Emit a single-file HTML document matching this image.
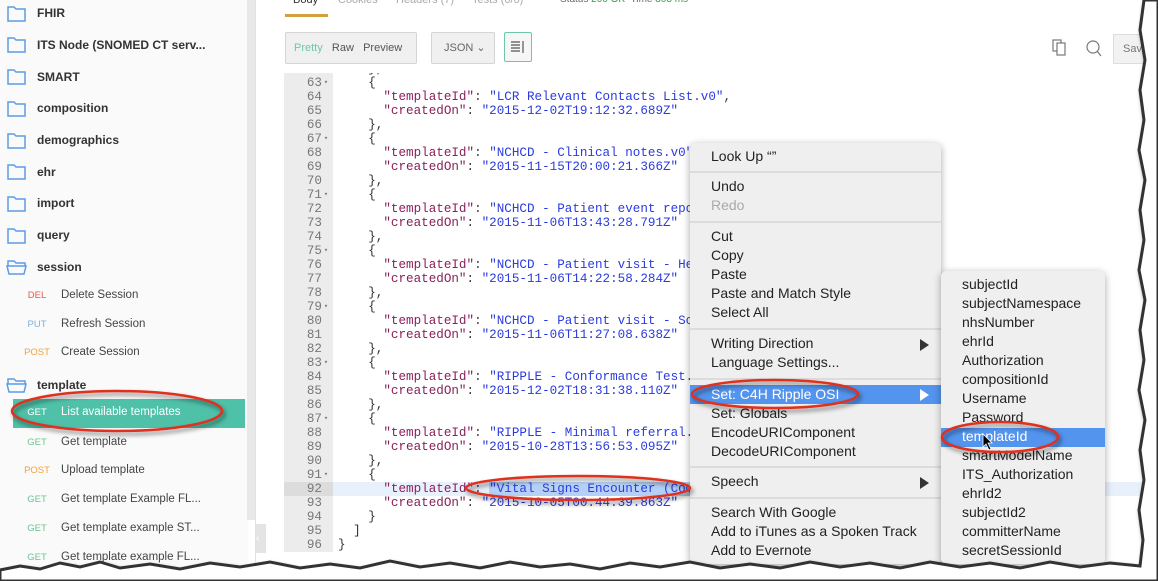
<!DOCTYPE html>
<html><head><meta charset="utf-8"><style>
*{margin:0;padding:0;box-sizing:border-box}
body{width:1158px;height:581px;overflow:hidden;background:#fff;position:relative;font-family:"Liberation Sans",sans-serif}
.abs{position:absolute}
#side{left:0;top:0;width:248px;height:581px;background:#fafafa}
.fold{position:absolute;left:37px;font-size:12px;font-weight:bold;color:#333}
.m{position:absolute;left:20px;width:34px;text-align:center;font-size:9.5px;font-weight:500}
.t{position:absolute;left:61px;font-size:11.5px;color:#444}
.code{position:absolute;font-family:"Liberation Mono",monospace;font-size:12.6px;white-space:pre;line-height:14px;color:#333}
.k{color:#8a1f5a}.s{color:#2a3be0}
.ln{position:absolute;left:284px;width:38px;text-align:right;font-family:"Liberation Mono",monospace;font-size:12.6px;color:#777;line-height:14px}
.menu{position:absolute;background:#efefef;border-radius:5px;box-shadow:0 2px 8px rgba(0,0,0,.35);font-size:14px;color:#222}
.mi{position:absolute;left:21px;line-height:19px;white-space:nowrap}
.sep{position:absolute;left:0;right:0;height:2px;background:#dcdcdc}
.arr{position:absolute;right:12px;width:0;height:0;border-left:9px solid #333;border-top:6px solid transparent;border-bottom:6px solid transparent}
</style></head><body>
<div id="side" class="abs"></div>
<div class="abs" style="left:247px;top:0;width:8px;height:520px;background:#e8e8e8"></div>
<div class="abs" style="left:255px;top:0;width:1px;height:581px;background:#e2e2e2"></div>
<svg class="abs" style="left:0;top:0" width="250" height="581">
<g fill="none" stroke="#5b9de6" stroke-width="1.5">
<path d="M8 7h6l2 2h9v12H8z"/><path d="M8 38h6l2 2h9v12H8z"/><path d="M8 70h6l2 2h9v12H8z"/><path d="M8 102h6l2 2h9v12H8z"/><path d="M8 134h6l2 2h9v12H8z"/><path d="M8 165h6l2 2h9v12H8z"/><path d="M8 197h6l2 2h9v12H8z"/><path d="M8 229h6l2 2h9v12H8z"/>
<path d="M8 261h6l2 2h9v3H8zM7 266h19l-2 8H9z"/><path d="M8 379h6l2 2h9v3H8zM7 384h19l-2 8H9z"/>
</g></svg>
<div class="fold" style="top:6px">FHIR</div>
<div class="fold" style="top:38px">ITS Node (SNOMED CT serv...</div>
<div class="fold" style="top:70px">SMART</div>
<div class="fold" style="top:101px">composition</div>
<div class="fold" style="top:133px">demographics</div>
<div class="fold" style="top:165px">ehr</div>
<div class="fold" style="top:196px">import</div>
<div class="fold" style="top:228px">query</div>
<div class="fold" style="top:260px">session</div>
<div class="fold" style="top:378px">template</div>
<div class="m" style="top:290px;color:#e8574c">DEL</div><div class="t" style="top:289px">Delete Session</div>
<div class="m" style="top:319px;color:#7eaee0">PUT</div><div class="t" style="top:318px">Refresh Session</div>
<div class="m" style="top:347px;color:#f4a03c">POST</div><div class="t" style="top:346px">Create Session</div>
<div class="abs" style="left:13px;top:399px;width:232px;height:29px;background:#4fc1a9"></div>
<div class="m" style="top:407px;color:#fff">GET</div><div class="t" style="top:406px;color:#fff">List available templates</div>
<div class="m" style="top:437px;color:#6cc48f">GET</div><div class="t" style="top:436px">Get template</div>
<div class="m" style="top:465px;color:#f4a03c">POST</div><div class="t" style="top:464px">Upload template</div>
<div class="m" style="top:494px;color:#6cc48f">GET</div><div class="t" style="top:493px">Get template Example FL...</div>
<div class="m" style="top:523px;color:#6cc48f">GET</div><div class="t" style="top:522px">Get template example ST...</div>
<div class="m" style="top:552px;color:#6cc48f">GET</div><div class="t" style="top:551px">Get template example FL...</div>

<div class="abs" style="left:293px;top:-6px;font-size:11px;color:#333">Body</div>
<div class="abs" style="left:338px;top:-6px;font-size:11px;color:#aaa">Cookies</div>
<div class="abs" style="left:396px;top:-6px;font-size:11px;color:#aaa">Headers (7)</div>
<div class="abs" style="left:472px;top:-6px;font-size:11px;color:#aaa">Tests (0/0)</div>
<div class="abs" style="left:560px;top:-6px;font-size:10px;color:#666">Status <span style="color:#3a9a50">200 OK</span> &nbsp;Time <span style="color:#3a9a50">303 ms</span></div>
<div class="abs" style="left:285px;top:14px;width:43px;height:3px;background:#d2a23a"></div>
<div class="abs" style="left:285px;top:32px;width:132px;height:32px;border:1px solid #d5d5d5;background:#f0f0f0;border-radius:2px;font-size:11px;line-height:30px;color:#555;padding-left:8px">
<span style="color:#6cc8a8">Pretty</span>&nbsp;&nbsp; Raw &nbsp;&nbsp;Preview</div>
<div class="abs" style="left:431px;top:32px;width:64px;height:32px;border:1px solid #d5d5d5;background:#f0f0f0;border-radius:2px;font-size:11px;line-height:30px;color:#666;padding-left:12px">JSON ⌄</div>
<div class="abs" style="left:504px;top:32px;width:28px;height:30px;border:1px solid #6cc8a8;border-radius:2px;background:#f6f6f6"></div>
<svg class="abs" style="left:510px;top:40px" width="16" height="14" stroke="#555" stroke-width="1.2"><path d="M1 2h9M1 5h9M1 8h9M1 11h9M13 1v12"/></svg>
<svg class="abs" style="left:1050px;top:37px" width="60" height="22" fill="none" stroke="#777" stroke-width="1.2"><rect x="3" y="3" width="8" height="11"/><rect x="7" y="6" width="8" height="12" fill="#fff"/><circle cx="43" cy="10" r="6"/><path d="M47 14l4 5"/></svg>
<div class="abs" style="left:1113px;top:34px;width:40px;height:30px;border:1px solid #ddd;background:#f2f2f2;font-size:11px;line-height:28px;color:#777;padding-left:9px">Save</div>

<div class="abs" style="left:284px;top:73px;width:49px;height:479px;background:#ececec"></div>
<div class="abs" style="left:284px;top:482px;width:860px;height:14px;background:#e8f0fc"></div>
<div class="abs" style="left:284px;top:482px;width:49px;height:14px;background:#dcdcdc"></div>
<div class="abs" style="left:256px;top:524px;width:10px;height:29px;background:#e4e4e4;color:#fff;font-size:10px;line-height:29px">‹</div>
<div class="ln" style="top:76px">63<br>64<br>65<br>66<br>67<br>68<br>69<br>70<br>71<br>72<br>73<br>74<br>75<br>76<br>77<br>78<br>79<br>80<br>81<br>82<br>83<br>84<br>85<br>86<br>87<br>88<br>89<br>90<br>91<br>92<br>93<br>94<br>95<br>96</div>
<div class="ln" style="top:76px;left:321px;width:10px;font-size:7px;text-align:center">▾<br><br><br><br>▾<br><br><br><br>▾<br><br><br><br>▾<br><br><br><br>▾<br><br><br><br>▾<br><br><br><br>▾<br><br><br><br>▾</div>
<div class="abs" style="left:338px;top:73px;width:820px;height:480px;overflow:hidden">
<div class="code" style="left:0;top:-11px">    },
    {
      <span class="k">"templateId"</span>: <span class="s">"LCR Relevant Contacts List.v0"</span>,
      <span class="k">"createdOn"</span>: <span class="s">"2015-12-02T19:12:32.689Z"</span>
    },
    {
      <span class="k">"templateId"</span>: <span class="s">"NCHCD - Clinical notes.v0"</span>,
      <span class="k">"createdOn"</span>: <span class="s">"2015-11-15T20:00:21.366Z"</span>
    },
    {
      <span class="k">"templateId"</span>: <span class="s">"NCHCD - Patient event report.v0"</span>,
      <span class="k">"createdOn"</span>: <span class="s">"2015-11-06T13:43:28.791Z"</span>
    },
    {
      <span class="k">"templateId"</span>: <span class="s">"NCHCD - Patient visit - Health"</span>,
      <span class="k">"createdOn"</span>: <span class="s">"2015-11-06T14:22:58.284Z"</span>
    },
    {
      <span class="k">"templateId"</span>: <span class="s">"NCHCD - Patient visit - School"</span>,
      <span class="k">"createdOn"</span>: <span class="s">"2015-11-06T11:27:08.638Z"</span>
    },
    {
      <span class="k">"templateId"</span>: <span class="s">"RIPPLE - Conformance Test.v0"</span>,
      <span class="k">"createdOn"</span>: <span class="s">"2015-12-02T18:31:38.110Z"</span>
    },
    {
      <span class="k">"templateId"</span>: <span class="s">"RIPPLE - Minimal referral.v0"</span>,
      <span class="k">"createdOn"</span>: <span class="s">"2015-10-28T13:56:53.095Z"</span>
    },
    {
      <span class="k">"templateId"</span>: <span class="s" style="background:#b4d0f6">"Vital Signs Encounter (Composition)"</span>,
      <span class="k">"createdOn"</span>: <span class="s">"2015-10-05T00:44:39.863Z"</span>
    }
  ]
}</div></div>

<div class="menu" style="left:690px;top:143px;width:251px;height:421px">
<div class="mi" style="top:4px">Look Up “”</div>
<div class="sep" style="top:28px"></div>
<div class="mi" style="top:34px">Undo</div>
<div class="mi" style="top:53px;color:#aaa">Redo</div>
<div class="sep" style="top:78px"></div>
<div class="mi" style="top:84px">Cut</div>
<div class="mi" style="top:103px">Copy</div>
<div class="mi" style="top:122px">Paste</div>
<div class="mi" style="top:141px">Paste and Match Style</div>
<div class="mi" style="top:160px">Select All</div>
<div class="sep" style="top:185px"></div>
<div class="mi" style="top:191px">Writing Direction</div><div class="arr" style="top:196px"></div>
<div class="mi" style="top:210px">Language Settings...</div>
<div class="sep" style="top:235px"></div>
<div class="abs" style="left:0;top:242px;width:251px;height:19px;background:#5394ee"></div>
<div class="mi" style="top:242px;color:#fff">Set: C4H Ripple OSI</div><div class="arr" style="top:246px;border-left-color:#fff"></div>
<div class="mi" style="top:261px">Set: Globals</div>
<div class="mi" style="top:280px">EncodeURIComponent</div>
<div class="mi" style="top:299px">DecodeURIComponent</div>
<div class="sep" style="top:323px"></div>
<div class="mi" style="top:329px">Speech</div><div class="arr" style="top:334px"></div>
<div class="sep" style="top:354px"></div>
<div class="mi" style="top:360px">Search With Google</div>
<div class="mi" style="top:379px">Add to iTunes as a Spoken Track</div>
<div class="mi" style="top:398px">Add to Evernote</div>
</div>
<div class="menu" style="left:941px;top:271px;width:164px;height:293px">
<div class="abs" style="left:0;top:157px;width:164px;height:19px;background:#5394ee"></div>
<div class="mi" style="top:4px;line-height:19px">subjectId<br>subjectNamespace<br>nhsNumber<br>ehrId<br>Authorization<br>compositionId<br>Username<br>Password<br><span style="color:#fff">templateId</span><br>smartModelName<br>ITS_Authorization<br>ehrId2<br>subjectId2<br>committerName<br>secretSessionId</div>
</div>

<svg class="abs" style="left:0;top:0" width="1158" height="581" fill="none" stroke="#e0301e" stroke-width="2.5">
<ellipse cx="117" cy="411" rx="105" ry="20" style="filter:drop-shadow(2px 3px 2px rgba(0,0,0,.5))"/>
<ellipse cx="578" cy="488" rx="112" ry="12" style="filter:drop-shadow(2px 3px 2px rgba(0,0,0,.5))"/>
<ellipse cx="775" cy="394" rx="83" ry="14" style="filter:drop-shadow(2px 3px 2px rgba(0,0,0,.5))"/>
<ellipse cx="1000" cy="437" rx="58" ry="15" style="filter:drop-shadow(2px 3px 2px rgba(0,0,0,.5))"/>
<path d="M983 434l0 13 3-3 3 6 2-1-3-6 4 0z" fill="#000" stroke="#fff" stroke-width="0.8"/>
</svg>

<svg class="abs" style="left:0;top:0" width="1158" height="581">
<path d="M0 570 L20 566 L40 569 L60 563 L80 567 L100 562 L120 568 L150 564 L180 569 L210 563 L240 567 L270 562 L300 568 L330 564 L360 568 L390 561 L420 567 L450 563 L480 568 L510 562 L540 567 L570 564 L600 569 L630 563 L660 567 L690 562 L720 568 L750 564 L780 568 L810 562 L840 567 L870 563 L900 568 L930 562 L960 567 L990 563 L1020 568 L1050 562 L1080 567 L1110 563 L1140 566 L1143 540 L1139 510 L1144 480 L1140 450 L1145 420 L1139 390 L1144 360 L1140 330 L1145 300 L1139 270 L1144 240 L1140 210 L1145 180 L1139 150 L1144 120 L1140 90 L1145 60 L1140 30 L1144 0 L1158 0 L1158 581 L0 581 Z" fill="#fff" stroke="#333" stroke-width="3" style="filter:drop-shadow(2px 3px 2px rgba(0,0,0,.6))"/>
</svg>
</body></html>
